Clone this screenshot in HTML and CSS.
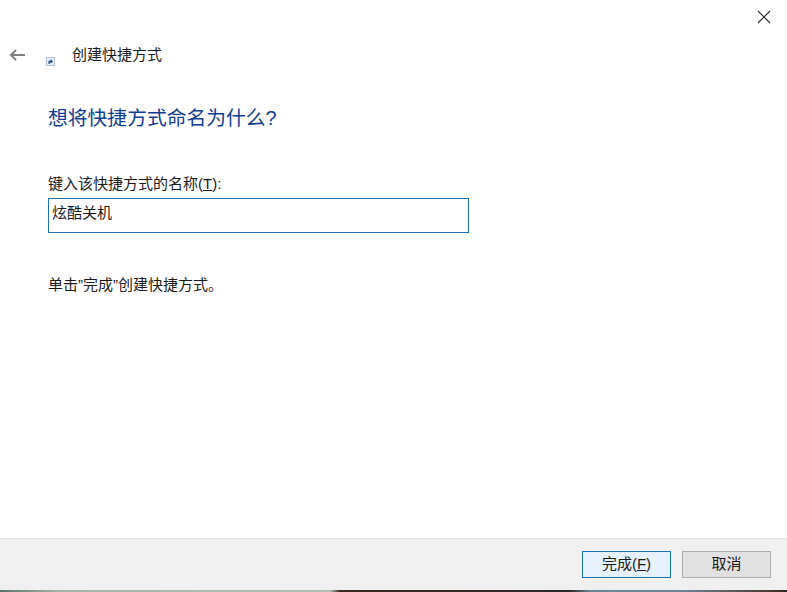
FILE: index.html
```html
<!DOCTYPE html>
<html lang="zh-CN">
<head>
<meta charset="utf-8">
<title>创建快捷方式</title>
<link rel="stylesheet" href="styles.css">
</head>
<body>
<div class="window">
  <div class="titlebar">
    <svg class="close" width="14" height="14" viewBox="0 0 14 14"><path d="M1 1 L13 13 M13 1 L1 13" stroke="#2a2a2a" stroke-width="1.1" fill="none"/></svg>
  </div>
  <div class="navrow">
    <svg class="back" width="17" height="12" viewBox="0 0 17 12"><path d="M16 6 H2 M7 1 L2 6 L7 11" stroke="#808080" stroke-width="2" fill="none"/></svg>
    <svg class="shortcut" width="9" height="9" viewBox="0 0 9 9"><rect x="0.5" y="0.5" width="8" height="8" fill="#e6eef7" stroke="#b5c4d6"/><path d="M2.5 7 V3.8 H4.5 V2 L7 4.4 L4.5 6.4 V5.2 H3.8 V7 Z" fill="#1c4f8f"/></svg>
    <span class="navtitle">创建快捷方式</span>
  </div>
  <main class="content">
    <h1 class="heading">想将快捷方式命名为什么?</h1>
    <label class="label" for="name">键入该快捷方式的名称(<u>T</u>):</label>
    <input class="field" id="name" type="text" value="炫酷关机">
    <p class="hint">单击”完成”创建快捷方式。</p>
  </main>
  <footer class="footer">
    <button class="btn primary">完成(<u>F</u>)</button>
    <button class="btn">取消</button>
  </footer>
</div>
<div class="desktop"></div>
</body>
</html>
```

FILE: styles.css
```css
* { box-sizing: border-box; }
html, body { margin: 0; height: 100%; }
body {
  width: 787px;
  height: 592px;
  overflow: hidden;
  background: #fff;
  color: #1a1a1a;
  font-family: "Liberation Sans", "Noto Sans CJK SC", sans-serif;
  font-size: 15px;
  display: flex;
  flex-direction: column;
}
.window { flex: 1; display: flex; flex-direction: column; min-height: 0; }
.titlebar { height: 36px; display: flex; justify-content: flex-end; padding: 10px 16px 0 0; flex: none; }
.close { display: block; }
.navrow { height: 38px; display: flex; align-items: center; padding-left: 9px; flex: none; }
.back { flex: none; }
.shortcut { flex: none; margin: 12px 0 0 20px; }
.navtitle { margin-left: 17px; line-height: 20px; }
.content { flex: 1; padding: 30px 0 0 48px; min-height: 0; }
.heading { margin: 0; font-size: 19.8px; font-weight: 400; line-height: 28px; color: #0f3d8f; }
.label { display: block; margin-top: 42px; line-height: 20px; }
.field {
  display: block;
  width: 421px;
  height: 35px;
  margin-top: 4px;
  padding: 0 3px 9px;
  border: 1px solid #1a72b8;
  outline: 0;
  font: inherit;
  color: inherit;
  background: #fff;
}
.hint { margin: 42px 0 0; line-height: 20px; }
.footer {
  height: 52px;
  flex: none;
  display: flex;
  justify-content: flex-end;
  gap: 11px;
  padding: 12px 16px 0 0;
  background: #f0f0f0;
  border-top: 1px solid #dfdfdf;
}
.btn {
  width: 89px;
  height: 27px;
  padding: 0 0 5px;
  border: 1px solid #adadad;
  background: #e1e1e1;
  font: inherit;
  color: inherit;
}
.btn.primary { background: #e5f1fb; border-color: #1a72b8; }
.desktop {
  height: 2px;
  flex: none;
  background: linear-gradient(90deg, #5f7468 0, #a3b5a8 60px, #b0bfb4 330px, #3a2a22 340px, #2e2a2a 570px, #6b8796 590px, #6d8797 680px, #4a3a30 770px, #2f2620 787px);
}
```
